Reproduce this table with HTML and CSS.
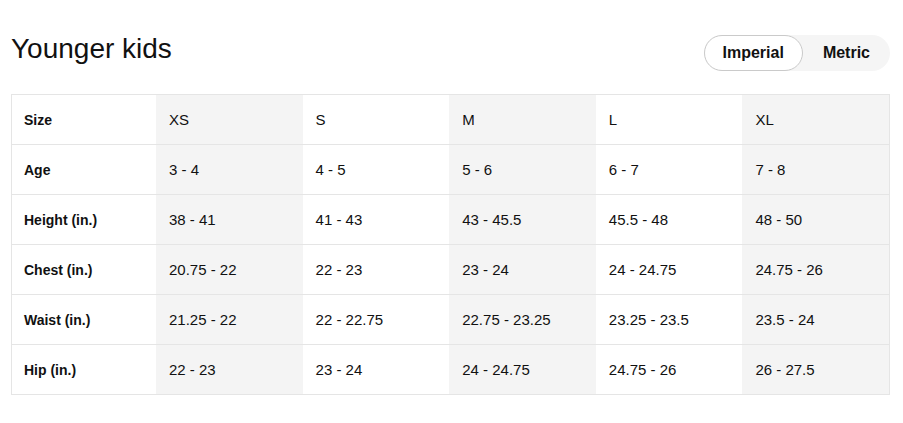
FILE: index.html
```html
<!DOCTYPE html>
<html>
<head>
<meta charset="utf-8">
<link rel="stylesheet" href="styles.css">
</head>
<body>
<div class="page">
  <div class="header">
    <h1 class="title">Younger kids</h1>
    <div class="toggle">
      <span class="opt active">Imperial</span>
      <span class="opt">Metric</span>
    </div>
  </div>
  <div class="chart">
    <div class="cell label">Size</div><div class="cell alt">XS</div><div class="cell">S</div><div class="cell alt">M</div><div class="cell">L</div><div class="cell alt">XL</div>
    <div class="cell label">Age</div><div class="cell alt">3 - 4</div><div class="cell">4 - 5</div><div class="cell alt">5 - 6</div><div class="cell">6 - 7</div><div class="cell alt">7 - 8</div>
    <div class="cell label">Height (in.)</div><div class="cell alt">38 - 41</div><div class="cell">41 - 43</div><div class="cell alt">43 - 45.5</div><div class="cell">45.5 - 48</div><div class="cell alt">48 - 50</div>
    <div class="cell label">Chest (in.)</div><div class="cell alt">20.75 - 22</div><div class="cell">22 - 23</div><div class="cell alt">23 - 24</div><div class="cell">24 - 24.75</div><div class="cell alt">24.75 - 26</div>
    <div class="cell label">Waist (in.)</div><div class="cell alt">21.25 - 22</div><div class="cell">22 - 22.75</div><div class="cell alt">22.75 - 23.25</div><div class="cell">23.25 - 23.5</div><div class="cell alt">23.5 - 24</div>
    <div class="cell label last">Hip (in.)</div><div class="cell alt last">22 - 23</div><div class="cell last">23 - 24</div><div class="cell alt last">24 - 24.75</div><div class="cell last">24.75 - 26</div><div class="cell alt last">26 - 27.5</div>
  </div>
</div>
</body>
</html>
```
FILE: styles.css
```css
* { box-sizing: border-box; }
html, body { margin: 0; padding: 0; background: #fff; }
body {
  font-family: "Liberation Sans", Arial, sans-serif;
  color: #111;
}
.page {
  padding: 33px 13px 0 11px;
}
.header {
  display: flex;
  justify-content: space-between;
  align-items: flex-start;
}
.title {
  margin: 0;
  font-size: 28px;
  line-height: 32px;
  font-weight: normal;
  color: #111;
}
.toggle {
  margin-top: 2px;
  display: flex;
  background: #f5f5f5;
  border-radius: 999px;
  height: 36px;
}
.opt {
  display: flex;
  align-items: center;
  padding: 0 19px;
  font-size: 16px;
  font-weight: bold;
  border-radius: 999px;
  border: 1px solid transparent;
  color: #111;
}
.opt.active {
  background: #fff;
  border-color: #cacaca;
  padding: 0 18px;
}
.chart {
  margin-top: 23px;
  display: grid;
  grid-template-columns: 144px repeat(5, 1fr);
  border: 1px solid #e5e5e5;
}
.cell {
  height: 50px;
  border-bottom: 1px solid #e5e5e5;
  display: flex;
  align-items: center;
  padding-left: 13px;
  font-size: 15px;
  color: #111;
}
.cell.last {
  height: 49px;
  border-bottom: none;
}
.cell.label {
  padding-left: 12px;
  font-size: 14px;
  font-weight: bold;
}
.cell.alt {
  background: #f4f4f4;
}
```
